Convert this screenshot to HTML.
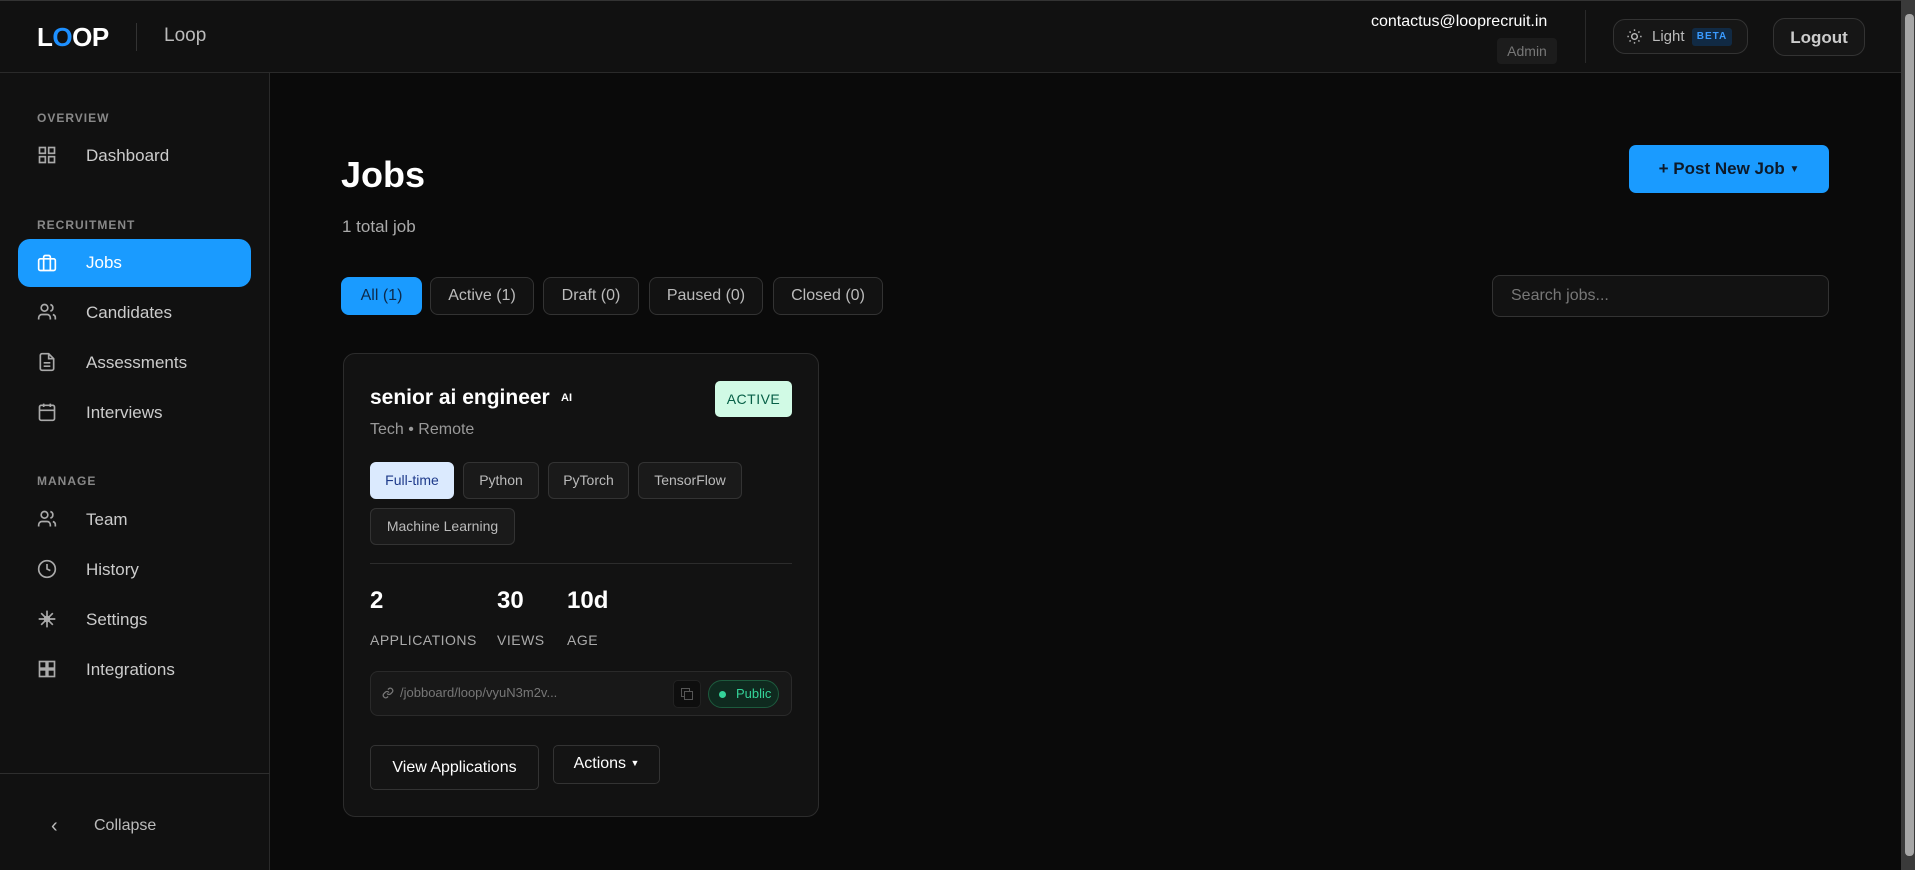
<!DOCTYPE html>
<html><head><meta charset="utf-8"><style>
*{box-sizing:border-box;margin:0;padding:0}
body{width:1915px;height:870px;overflow:hidden;background:#0a0a0a;font-family:"Liberation Sans",sans-serif;position:relative;color:#ddd}
.a{position:absolute}
.hdr{left:0;top:0;width:1901px;height:73px;background:#111;border-bottom:1px solid #2a2a2a;border-top:1px solid #333}
.side{left:0;top:73px;width:270px;height:797px;background:#111;border-right:1px solid #2a2a2a}
.sec{font-size:12px;font-weight:bold;letter-spacing:1px;color:#888;left:37px}
.it{left:86px;font-size:17px;color:#ccc;line-height:20px}
.ic{left:37px;width:20px;height:20px}
.tab{top:277px;height:38px;border:1px solid #333;border-radius:8px;background:#121212;color:#bbb;font-size:16px;line-height:36px;text-align:center}
.tag{height:37px;border:1px solid #333;border-radius:6px;background:#1a1a1a;color:#bbb;font-size:14px;line-height:35px;text-align:center}
.lbl{font-size:14px;color:#aaa;top:632px;letter-spacing:.5px}
.num{font-size:24px;font-weight:bold;color:#fff;top:587px}
</style></head><body>
<div class="a hdr"></div>
<div class="a" style="left:37px;top:22px;font-size:26px;font-weight:bold;color:#fff;letter-spacing:-0.5px">L<span style="color:#1e90ff">O</span>OP</div>
<div class="a" style="left:136px;top:23px;width:1px;height:28px;background:#333"></div>
<div class="a" style="left:164px;top:25px;font-size:19px;color:#bbb">Loop</div>
<div class="a" style="left:1371px;top:13px;font-size:16px;color:#fff">contactus@looprecruit.in</div>
<div class="a" style="left:1497px;top:38px;width:60px;height:26px;background:#1c1c1c;border-radius:4px;color:#777;font-size:14px;text-align:center;line-height:26px">Admin</div>
<div class="a" style="left:1585px;top:10px;width:1px;height:53px;background:#2a2a2a"></div>
<div class="a" style="left:1613px;top:19px;width:135px;height:35px;border:1px solid #333;border-radius:12px;background:#161616"></div>
<svg class="a" style="left:1626px;top:28px" width="17" height="17" viewBox="0 0 24 24" fill="none" stroke="#bbb" stroke-width="2"><circle cx="12" cy="12" r="4"/><path d="M12 2v2M12 20v2M2 12h2M20 12h2M5 5l1.5 1.5M17.5 17.5L19 19M5 19l1.5-1.5M17.5 6.5L19 5"/></svg>
<div class="a" style="left:1652px;top:28px;font-size:15px;color:#bbb">Light</div>
<div class="a" style="left:1692px;top:28px;width:40px;height:18px;background:#112a44;border-radius:3px;color:#3a9bff;font-size:10px;font-weight:bold;text-align:center;line-height:18px;letter-spacing:1px">BETA</div>
<div class="a" style="left:1773px;top:18px;width:92px;height:38px;border:1px solid #333;border-radius:12px;background:#161616;color:#ccc;font-size:17px;font-weight:bold;text-align:center;line-height:38px">Logout</div>
<div class="a" style="left:1901px;top:0;width:14px;height:870px;background:#3a3a3a"></div>
<div class="a" style="left:1905px;top:14px;width:9px;height:842px;background:#a6a6a6;border-radius:4px"></div>

<div class="a side"></div>
<div class="a sec" style="top:111px">OVERVIEW</div>
<svg class="a ic" style="top:145px" viewBox="0 0 24 24" fill="none" stroke="#aaa" stroke-width="2"><rect x="3" y="3" width="7" height="7"/><rect x="14" y="3" width="7" height="7"/><rect x="3" y="14" width="7" height="7"/><rect x="14" y="14" width="7" height="7"/></svg>
<div class="a it" style="top:146px">Dashboard</div>
<div class="a sec" style="top:218px">RECRUITMENT</div>
<div class="a" style="left:18px;top:239px;width:233px;height:48px;background:#1a9bff;border-radius:12px"></div>
<svg class="a ic" style="top:253px" viewBox="0 0 24 24" fill="none" stroke="#fff" stroke-width="2"><rect x="2" y="7" width="20" height="14" rx="2"/><path d="M16 21V5a2 2 0 0 0-2-2h-4a2 2 0 0 0-2 2v16"/></svg>
<div class="a it" style="top:253px;color:#fff">Jobs</div>
<svg class="a ic" style="top:302px" viewBox="0 0 24 24" fill="none" stroke="#aaa" stroke-width="2"><path d="M16 21v-2a4 4 0 0 0-4-4H6a4 4 0 0 0-4 4v2"/><circle cx="9" cy="7" r="4"/><path d="M22 21v-2a4 4 0 0 0-3-3.87M16 3.13a4 4 0 0 1 0 7.75"/></svg>
<div class="a it" style="top:303px">Candidates</div>
<svg class="a ic" style="top:352px" viewBox="0 0 24 24" fill="none" stroke="#aaa" stroke-width="2"><path d="M14 2H6a2 2 0 0 0-2 2v16a2 2 0 0 0 2 2h12a2 2 0 0 0 2-2V8z"/><path d="M14 2v6h6M16 13H8M16 17H8"/></svg>
<div class="a it" style="top:353px">Assessments</div>
<svg class="a ic" style="top:402px" viewBox="0 0 24 24" fill="none" stroke="#aaa" stroke-width="2"><rect x="3" y="4" width="18" height="18" rx="2"/><path d="M16 2v4M8 2v4M3 10h18"/></svg>
<div class="a it" style="top:403px">Interviews</div>
<div class="a sec" style="top:474px">MANAGE</div>
<svg class="a ic" style="top:509px" viewBox="0 0 24 24" fill="none" stroke="#aaa" stroke-width="2"><path d="M16 21v-2a4 4 0 0 0-4-4H6a4 4 0 0 0-4 4v2"/><circle cx="9" cy="7" r="4"/><path d="M22 21v-2a4 4 0 0 0-3-3.87M16 3.13a4 4 0 0 1 0 7.75"/></svg>
<div class="a it" style="top:510px">Team</div>
<svg class="a ic" style="top:559px" viewBox="0 0 24 24" fill="none" stroke="#aaa" stroke-width="2"><circle cx="12" cy="12" r="10"/><path d="M12 6v6l4 2"/></svg>
<div class="a it" style="top:560px">History</div>
<svg class="a ic" style="top:609px" viewBox="0 0 24 24" fill="none" stroke="#aaa" stroke-width="2"><path d="M12 2v20M2 12h20M5 5l14 14M19 5L5 19"/><circle cx="12" cy="12" r="3"/></svg>
<div class="a it" style="top:610px">Settings</div>
<svg class="a ic" style="top:659px" viewBox="0 0 24 24" fill="none" stroke="#aaa" stroke-width="2"><rect x="3" y="3" width="8" height="8"/><rect x="13" y="3" width="8" height="8"/><rect x="3" y="13" width="8" height="8"/><rect x="13" y="13" width="8" height="8"/></svg>
<div class="a it" style="top:660px">Integrations</div>
<div class="a" style="left:0;top:773px;width:270px;height:1px;background:#2e2e2e"></div>
<div class="a" style="left:51px;top:815px;font-size:20px;color:#bbb">‹</div>
<div class="a" style="left:94px;top:817px;font-size:16px;color:#bbb">Collapse</div>

<div class="a" style="left:341px;top:154px;font-size:36px;font-weight:bold;color:#fff">Jobs</div>
<div class="a" style="left:342px;top:217px;font-size:17px;color:#aaa">1 total job</div>
<div class="a" style="left:1629px;top:145px;width:200px;height:48px;background:#1a9bff;border-radius:7px;color:#0d1a2a;font-size:17px;font-weight:bold;text-align:center;line-height:48px">+ Post New Job <span style="font-size:10px;vertical-align:2px">▼</span></div>
<div class="a tab" style="left:341px;width:81px;background:#1a9bff;border-color:#1a9bff;color:#0d2a4a">All (1)</div>
<div class="a tab" style="left:430px;width:104px">Active (1)</div>
<div class="a tab" style="left:543px;width:96px">Draft (0)</div>
<div class="a tab" style="left:649px;width:114px">Paused (0)</div>
<div class="a tab" style="left:773px;width:110px">Closed (0)</div>
<div class="a" style="left:1492px;top:275px;width:337px;height:42px;border:1px solid #333;border-radius:8px;background:#121212;color:#777;font-size:16px;line-height:40px;padding-left:18px">Search jobs...</div>

<div class="a" style="left:343px;top:353px;width:476px;height:464px;background:#121212;border:1px solid #2c2c2c;border-radius:12px"></div>
<div class="a" style="left:370px;top:386px;font-size:21px;font-weight:bold;color:#fff">senior ai engineer</div>
<div class="a" style="left:561px;top:392px;font-size:11px;font-weight:bold;color:#fff">AI</div>
<div class="a" style="left:715px;top:381px;width:77px;height:36px;background:#d1fae5;border-radius:5px;color:#065f46;font-size:14px;text-align:center;line-height:36px;letter-spacing:.5px">ACTIVE</div>
<div class="a" style="left:370px;top:421px;font-size:16px;color:#999">Tech • Remote</div>
<div class="a tag" style="left:370px;top:462px;width:84px;background:#dbeafe;border-color:#dbeafe;color:#1e3a8a">Full-time</div>
<div class="a tag" style="left:463px;top:462px;width:76px">Python</div>
<div class="a tag" style="left:548px;top:462px;width:81px">PyTorch</div>
<div class="a tag" style="left:638px;top:462px;width:104px">TensorFlow</div>
<div class="a tag" style="left:370px;top:508px;width:145px">Machine Learning</div>
<div class="a" style="left:370px;top:563px;width:422px;height:1px;background:#2c2c2c"></div>
<div class="a num" style="left:370px">2</div>
<div class="a num" style="left:497px">30</div>
<div class="a num" style="left:567px">10d</div>
<div class="a lbl" style="left:370px">APPLICATIONS</div>
<div class="a lbl" style="left:497px">VIEWS</div>
<div class="a lbl" style="left:567px">AGE</div>
<div class="a" style="left:370px;top:671px;width:422px;height:45px;background:#181818;border:1px solid #2a2a2a;border-radius:8px"></div>
<svg class="a" style="left:382px;top:687px" width="12" height="12" viewBox="0 0 24 24" fill="none" stroke="#777" stroke-width="2.5"><path d="M10 13a5 5 0 0 0 7.5.5l3-3a5 5 0 0 0-7-7l-1.7 1.7M14 11a5 5 0 0 0-7.5-.5l-3 3a5 5 0 0 0 7 7l1.7-1.7"/></svg>
<div class="a" style="left:400px;top:685px;font-size:13px;color:#777">/jobboard/loop/vyuN3m2v...</div>
<div class="a" style="left:673px;top:680px;width:28px;height:28px;background:#0e0e0e;border:1px solid #222;border-radius:5px"></div>
<div class="a" style="left:681px;top:688px;width:9px;height:9px;border:1px solid #555"></div>
<div class="a" style="left:684px;top:691px;width:9px;height:9px;border:1px solid #555;background:#0e0e0e"></div>
<div class="a" style="left:708px;top:680px;width:71px;height:28px;background:#0f2a1f;border:1px solid #1d5a3d;border-radius:14px;color:#34d399;font-size:13px;line-height:26px;padding-left:27px">Public</div>
<div class="a" style="left:719px;top:691px;width:7px;height:7px;border-radius:50%;background:#34d399"></div>
<div class="a" style="left:370px;top:745px;width:169px;height:45px;background:#141414;border:1px solid #333;border-radius:5px;color:#fff;font-size:16px;text-align:center;line-height:43px">View Applications</div>
<div class="a" style="left:553px;top:745px;width:107px;height:39px;background:#141414;border:1px solid #333;border-radius:5px;color:#fff;font-size:16px;text-align:center;line-height:34px">Actions <span style="font-size:9px;vertical-align:2px">▼</span></div>
</body></html>
